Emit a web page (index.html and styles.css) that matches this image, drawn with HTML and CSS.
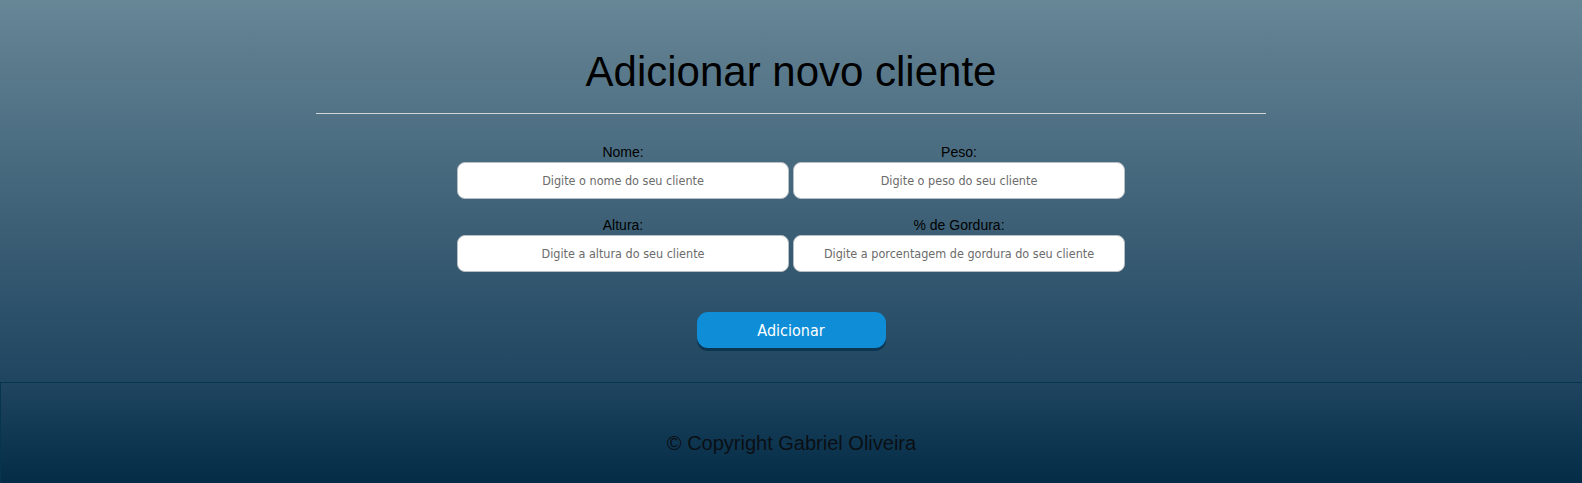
FILE: index.html
```html
<!DOCTYPE html>
<html lang="pt-BR">
<head>
<meta charset="utf-8">
<title>Adicionar novo cliente</title>
<link rel="stylesheet" href="styles.css">
</head>
<body>
<main class="content">
  <h1 class="title">Adicionar novo cliente</h1>
  <hr class="divider">
  <form class="client-form">
    <div class="fields">
      <div class="field">
        <label class="field-label" for="nome">Nome:</label>
        <input class="field-input" id="nome" type="text" placeholder="Digite o nome do seu cliente">
      </div>
      <div class="field">
        <label class="field-label" for="peso">Peso:</label>
        <input class="field-input" id="peso" type="text" placeholder="Digite o peso do seu cliente">
      </div>
      <div class="field">
        <label class="field-label" for="altura">Altura:</label>
        <input class="field-input" id="altura" type="text" placeholder="Digite a altura do seu cliente">
      </div>
      <div class="field">
        <label class="field-label" for="gordura">% de Gordura:</label>
        <input class="field-input" id="gordura" type="text" placeholder="Digite a porcentagem de gordura do seu cliente">
      </div>
    </div>
    <div class="actions">
      <button class="submit" type="button">Adicionar</button>
    </div>
  </form>
</main>
<footer class="footer">
  <p class="copyright">© Copyright Gabriel Oliveira</p>
</footer>
</body>
</html>
```
FILE: styles.css
```css
html, body {
  margin: 0;
  padding: 0;
}
body {
  min-height: 483px;
  background: linear-gradient(to bottom, #678696 0%, #1f4560 79%, #042c47 100%);
  font-family: "Liberation Sans", Arial, sans-serif;
  color: #000;
  display: flex;
  flex-direction: column;
}
.content {
  flex: 1;
  padding-top: 47px;
}
.title {
  margin: 0;
  text-align: center;
  font-size: 42px;
  font-weight: normal;
  line-height: 50px;
}
.divider {
  width: 60%;
  margin: 16px auto 0;
  border: 0;
  border-top: 1px solid #d2d5d7;
  height: 0;
}
.client-form {
  width: 668px;
  margin: 30px auto 0;
}
.fields {
  display: grid;
  grid-template-columns: 332px 332px;
  column-gap: 4px;
  row-gap: 18px;
}
.field {
  display: flex;
  flex-direction: column;
  align-items: center;
}
.field-label {
  font-size: 14px;
  line-height: 16px;
  margin-bottom: 2px;
}
.field-input {
  box-sizing: border-box;
  width: 100%;
  height: 37px;
  border: 1px solid #b8bfc4;
  border-radius: 8px;
  background: #fff;
  text-align: center;
  font-family: "DejaVu Sans Condensed", "DejaVu Sans", sans-serif;
  font-size: 12.5px;
  color: #333;
  outline: none;
}
.field-input::placeholder {
  color: #6b6b6b;
}
.actions {
  display: flex;
  justify-content: center;
  margin-top: 40px;
}
.submit {
  width: 189px;
  height: 36px;
  border: 0;
  border-radius: 11px;
  background: #0f8dd6;
  color: #fff;
  font-family: "DejaVu Sans Condensed", "DejaVu Sans", sans-serif;
  font-size: 16px;
  box-shadow: 0 3px 0 #0b3550;
  cursor: pointer;
}
.footer {
  height: 100px;
  border-top: 1px solid #07354f;
  border-left: 1px solid #07354f;
  display: flex;
  align-items: center;
  justify-content: center;
}
.copyright {
  margin: 20px 0 0;
  font-size: 20px;
  color: #0a0f14;
}
```
